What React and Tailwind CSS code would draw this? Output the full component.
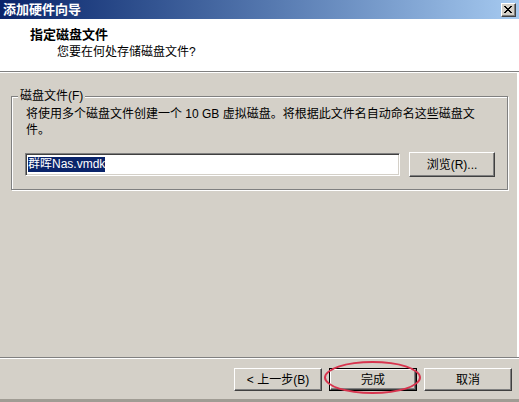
import React from 'react';

const btn =
  "h-[23px] w-[88px] flex items-center justify-center text-[12px] text-black bg-[#d4d0c8] border border-t-white border-l-white border-b-[#404040] border-r-[#404040] shadow-[inset_-1px_-1px_0_#808080]";

const WizardButton = ({ label, isDefault }) => {
  if (isDefault) {
    return (
      <div className="border border-black">
        <div className="h-[21px] w-[86px] flex items-center justify-center text-[12px] text-black bg-[#d4d0c8] border border-t-white border-l-white border-b-[#404040] border-r-[#404040] shadow-[inset_-1px_-1px_0_#808080]">
          {label}
        </div>
      </div>
    );
  }
  return <div className={btn}>{label}</div>;
};

const App = () => {
  return (
    <div className="relative w-[519px] h-[402px] flex flex-col bg-[#d4d0c8] overflow-hidden font-['Liberation_Sans','Noto_Sans_CJK_SC',sans-serif] text-black">
      {/* title bar */}
      <div className="h-[19px] shrink-0 flex items-center justify-between bg-gradient-to-r from-[#0a246a] to-[#a6caf0] pl-[3px] pr-[3px]">
        <span className="text-[13px] font-bold text-white leading-[16px]">添加硬件向导</span>
        <div className="w-[15px] h-[14px] flex items-center justify-center bg-[#d4d0c8] border border-t-white border-l-white border-b-[#404040] border-r-[#404040] shadow-[inset_-1px_-1px_0_#808080]">
          <svg width="9" height="8" viewBox="0 0 9 8">
            <path d="M1 0 L8 7 M0 0 L7 7 M8 0 L1 7 M7 0 L0 7" stroke="#000" strokeWidth="1" />
          </svg>
        </div>
      </div>

      {/* header */}
      <div className="h-[53px] shrink-0 bg-white pt-[8px] border-b border-[#808080]">
        <div className="pl-[30px] text-[13px] font-bold leading-[16px]">指定磁盘文件</div>
        <div className="pl-[57px] mt-[1px] text-[12px] leading-[16px]">您要在何处存储磁盘文件?</div>
      </div>
      <div className="h-px shrink-0 bg-white" />

      {/* body */}
      <div className="flex-1 flex flex-col border-r-2 border-r-white pr-[2px]">
        <fieldset className="mt-[15px] ml-[11px] w-[497px] border border-[#808080] shadow-[inset_1px_1px_0_#fff,1px_1px_0_#fff] pl-[13px] pb-[12px]">
          <legend className="ml-[-7px] px-[2px] text-[12px] leading-[16px] bg-[#d4d0c8]">磁盘文件(F)</legend>
          <p className="mt-[2px] pl-[1px] text-[12px] leading-[16px] whitespace-nowrap">
            将使用多个磁盘文件创建一个 10 GB 虚拟磁盘。将根据此文件名自动命名这些磁盘文
            <br />
            件。
          </p>
          <div className="mt-[14px] flex items-center gap-[9px]">
            <div className="w-[375px] h-[23px] flex items-center bg-white border border-t-[#808080] border-l-[#808080] border-b-white border-r-white shadow-[inset_1px_1px_0_#404040,inset_-1px_-1px_0_#d4d0c8] pl-[2px]">
              <span className="bg-[#0a246a] text-white text-[12px] leading-[15px]">群晖Nas.vmdk</span>
            </div>
            <div className="h-[25px] w-[86px] flex items-center justify-center text-[12px] bg-[#d4d0c8] border border-t-white border-l-white border-b-[#404040] border-r-[#404040] shadow-[inset_-1px_-1px_0_#808080]">
              浏览(R)...
            </div>
          </div>
        </fieldset>
        <div className="flex-1" />
      </div>

      {/* footer */}
      <div className="shrink-0 h-px bg-[#808080]" />
      <div className="shrink-0 h-px bg-white" />
      <div className="shrink-0 h-[43px] flex items-start justify-end gap-[7px] pt-[9px] pr-[7px] border-b-[3px] border-b-[#a09c94]">
        <WizardButton label="< 上一步(B)" />
        <WizardButton label="完成" isDefault />
        <WizardButton label="取消" />
      </div>

      {/* hand-drawn highlight */}
      <div className="absolute left-[324px] top-[361px] w-[97px] h-[33px] rounded-[50%] border-2 border-[#d8344e] pointer-events-none" />
    </div>
  );
};

export default App;
